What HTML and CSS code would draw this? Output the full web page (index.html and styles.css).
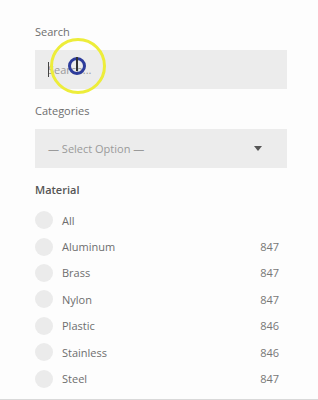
FILE: index.html
```html
<!DOCTYPE html>
<html>
<head>
<meta charset="utf-8">
<link rel="stylesheet" href="styles.css">
</head>
<body>
<div class="page">
  <div class="field">
    <div class="label">Search</div>
    <div class="input"><span class="caret"></span><span class="placeholder">Search...</span></div>
  </div>
  <div class="field">
    <div class="label">Categories</div>
    <div class="input select"><span class="placeholder">— Select Option —</span><span class="arrow"></span></div>
  </div>
  <div class="field">
    <div class="label strong">Material</div>
    <ul class="options">
      <li><span class="radio"></span><span class="name">All</span><span class="count"></span></li>
      <li><span class="radio"></span><span class="name">Aluminum</span><span class="count">847</span></li>
      <li><span class="radio"></span><span class="name">Brass</span><span class="count">847</span></li>
      <li><span class="radio"></span><span class="name">Nylon</span><span class="count">847</span></li>
      <li><span class="radio"></span><span class="name">Plastic</span><span class="count">846</span></li>
      <li><span class="radio"></span><span class="name">Stainless</span><span class="count">846</span></li>
      <li><span class="radio"></span><span class="name">Steel</span><span class="count">847</span></li>
    </ul>
  </div>
  <div class="cursor">
    <span class="ring"></span>
    <span class="dot"></span>
    <span class="ibeam"></span>
  </div>
</div>
</body>
</html>
```
FILE: styles.css
```css
* { box-sizing: border-box; }
html, body { margin: 0; padding: 0; background: #fdfdfd; }
body { font-family: "Open Sans", "Noto Sans", sans-serif; font-size: 11px; color: #6a6a6a; }
.page {
  position: relative;
  height: 400px;
  border-bottom: 1px solid #d9d9d9;
  padding: 24px 31px 0 35px;
  overflow: hidden;
}
.field { margin-bottom: 14px; }
.label { line-height: 16px; height: 16px; margin-bottom: 10px; color: #6e6e6e; }
.label.strong { font-weight: 600; color: #555; margin-bottom: 9px; }
.input {
  height: 39px;
  background: #ececec;
  display: flex;
  align-items: center;
  padding-left: 13px;
  position: relative;
}
.select { padding-right: 25px; justify-content: space-between; }
.placeholder { color: #9a9a9a; font-size: 11px; }
.caret { width: 1px; height: 15px; background: #444; position: absolute; left: 13px; top: 12px; }
.arrow {
  width: 0; height: 0;
  border-left: 4.5px solid transparent;
  border-right: 4.5px solid transparent;
  border-top: 5px solid #555;
}
.options { list-style: none; margin: 0; padding: 0; }
.options li {
  height: 26.4px;
  display: flex;
  align-items: center;
}
.radio { width: 18px; height: 18px; border-radius: 50%; background: #ebebeb; margin-right: 9px; flex: none; }
.name { flex: 1; color: #6e6e6e; }
.count { width: 30px; margin-right: 8px; text-align: right; color: #777; }
.cursor { position: absolute; left: 50px; top: 38px; width: 56px; height: 56px; }
.ring {
  position: absolute; inset: 0;
  border-radius: 50%;
  border: 3px solid #eded3a;
}
.dot {
  position: absolute; left: 18px; top: 19px; width: 18px; height: 18px;
  border-radius: 50%;
  border: 3px solid #2d3c9c;
}
.ibeam {
  position: absolute; left: 26px; top: 19px; width: 2px; height: 14px; background: #333;
}
```
